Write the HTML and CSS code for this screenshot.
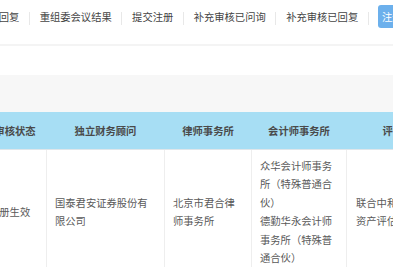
FILE: index.html
```html
<!DOCTYPE html>
<html lang="zh-CN">
<head>
<meta charset="utf-8">
<link rel="stylesheet" href="styles.css">
</head>
<body>
<div class="page">
  <nav class="tabs">
    <span class="tab">回复</span><span class="sep"></span>
    <span class="tab">重组委会议结果</span><span class="sep"></span>
    <span class="tab">提交注册</span><span class="sep"></span>
    <span class="tab">补充审核已问询</span><span class="sep"></span>
    <span class="tab">补充审核已回复</span><span class="sep"></span>
    <span class="tab active">注册结果</span>
  </nav>
  <div class="blank-white"></div>
  <div class="blank-gray"></div>
  <table class="grid">
    <colgroup>
      <col class="c1"><col class="c2"><col class="c3"><col class="c4"><col class="c5">
    </colgroup>
    <thead>
      <tr>
        <th>审核状态</th>
        <th>独立财务顾问</th>
        <th>律师事务所</th>
        <th>会计师事务所</th>
        <th>评估机构</th>
      </tr>
    </thead>
    <tbody>
      <tr>
        <td class="status">注册生效</td>
        <td>国泰君安证券股份有限公司</td>
        <td>北京市君合律师事务所</td>
        <td>众华会计师事务所（特殊普通合伙）<br>德勤华永会计师事务所（特殊普通合伙）</td>
        <td class="last">联合中和土地房地产资产评估有限公司</td>
      </tr>
    </tbody>
  </table>
</div>
</body>
</html>
```
FILE: styles.css
```css
html, body {
  margin: 0;
  padding: 0;
  background: #fff;
}
body {
  font-family: "Noto Sans CJK SC", "Noto Sans", sans-serif;
  font-size: 10.3px;
  color: #555;
  overflow: hidden;
}
.page {
  margin-left: -17px;
  width: 560px;
}
.tabs {
  display: flex;
  align-items: flex-start;
  height: 46px;
  box-sizing: border-box;
  padding: 5px 0 0 6px;
  border-bottom: 2px solid #f4f4f4;
}
.tab {
  display: block;
  line-height: 23px;
  height: 23px;
  padding: 0 9.7px;
  color: #444;
  white-space: nowrap;
}
.sep {
  display: block;
  width: 1px;
  height: 13px;
  margin-top: 7px;
  background: #e8e8e8;
}
.tab.active {
  margin-left: 9px;
  padding: 0 4px;
  background: #6cb0ec;
  color: #fff;
  border-radius: 3px;
}
.blank-white {
  height: 29px;
  background: #fff;
}
.blank-gray {
  height: 37px;
  background: #f7f7f7;
}
.grid {
  border-collapse: collapse;
  table-layout: fixed;
  width: 476px;
}
.c1 { width: 63px; }
.c2 { width: 118px; }
.c3 { width: 87px; }
.c4 { width: 95px; }
.c5 { width: 113px; }
.grid th {
  height: 37px;
  padding: 0;
  background: #a7def4;
  color: #4a4a4a;
  font-weight: bold;
  text-align: center;
  border-bottom: 1px solid #dfe6ea;
  white-space: nowrap;
}
.grid td {
  padding: 7px 8px;
  line-height: 18.4px;
  vertical-align: middle;
  text-align: left;
  color: #5a5a5a;
  border-left: 1px solid #eeeeee;
  border-right: 1px solid #eeeeee;
  word-break: break-all;
}
.grid td.status {
  padding-left: 5px;
  white-space: nowrap;
}
.grid td.last {
  padding-left: 9px;
}
```
